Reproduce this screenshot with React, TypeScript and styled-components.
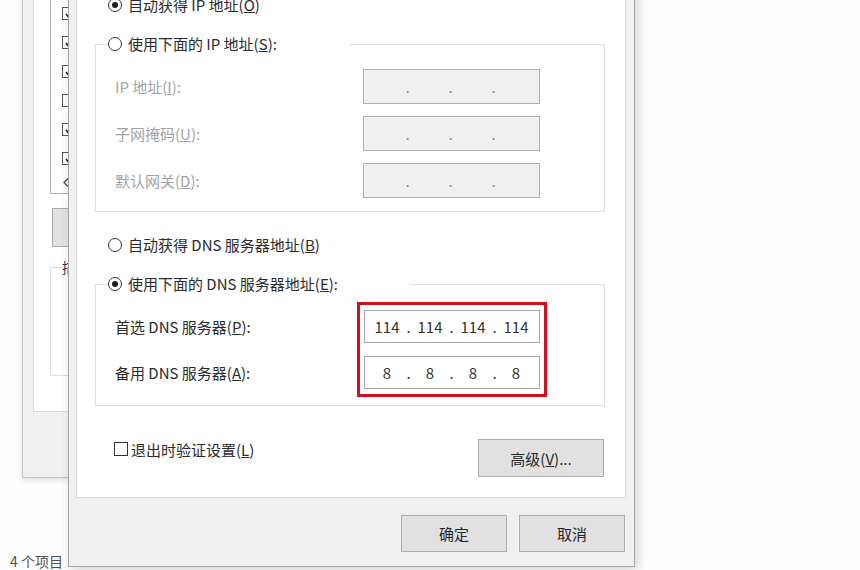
import React from 'react';
import styled, { createGlobalStyle } from 'styled-components';

const GlobalStyle = createGlobalStyle`
  html, body {
    margin: 0;
    padding: 0;
    background: #fdfdfd;
    overflow: hidden;
  }
`;

const Acc = ({ k }: { k: string }) => <u>{k}</u>;

const App = () => {
  return (
    <>
      <GlobalStyle />
      <Desktop>
        <StatusText>4 个项目</StatusText>

        <BackWindow>
          <BackPage>
            <ListBox>
              {[true, true, true, false, true, true].map((c, i) => (
                <ListItem key={i}>
                  <MiniCheck>
                    {c && (
                      <svg width="8" height="8" viewBox="0 0 8 8">
                        <polyline points="1,4 3,6.5 7,1.5" fill="none" stroke="#222" strokeWidth="1.6" />
                      </svg>
                    )}
                  </MiniCheck>
                </ListItem>
              ))}
              <ScrollRow>
                <svg width="6" height="9" viewBox="0 0 6 9">
                  <polyline points="5,0.5 1,4.5 5,8.5" fill="none" stroke="#555" strokeWidth="1.5" />
                </svg>
              </ScrollRow>
            </ListBox>
            <BackButton />
            <BackGroup>
              <BackLegend>描述</BackLegend>
            </BackGroup>
          </BackPage>
        </BackWindow>

        <Dialog>
          <TabPage>
            <RadioRow>
              <RadioDot $checked />
              <span>自动获得 IP 地址(<Acc k="O" />)</span>
            </RadioRow>

            <GroupBox>
              <GroupLegend>
                <RadioDot />
                <span>使用下面的 IP 地址(<Acc k="S" />):</span>
              </GroupLegend>
              <GroupBody>
                <FieldGrid $labelWidth={248} $gap={12}>
                  <FieldLabel $disabled>IP 地址(<Acc k="I" />):</FieldLabel>
                  <IpField $disabled><IpParts parts={['', '', '', '']} /></IpField>
                  <FieldLabel $disabled>子网掩码(<Acc k="U" />):</FieldLabel>
                  <IpField $disabled><IpParts parts={['', '', '', '']} /></IpField>
                  <FieldLabel $disabled>默认网关(<Acc k="D" />):</FieldLabel>
                  <IpField $disabled><IpParts parts={['', '', '', '']} /></IpField>
                </FieldGrid>
              </GroupBody>
            </GroupBox>

            <RadioRow $top={22}>
              <RadioDot />
              <span>自动获得 DNS 服务器地址(<Acc k="B" />)</span>
            </RadioRow>

            <GroupBox>
              <GroupLegend>
                <RadioDot $checked />
                <span>使用下面的 DNS 服务器地址(<Acc k="E" />):</span>
              </GroupLegend>
              <DnsBody>
                <LabelColumn>
                  <DnsLabel>首选 DNS 服务器(<Acc k="P" />):</DnsLabel>
                  <DnsLabel>备用 DNS 服务器(<Acc k="A" />):</DnsLabel>
                </LabelColumn>
                <Highlight>
                  <IpField $short><IpParts parts={['114', '114', '114', '114']} /></IpField>
                  <IpField $short><IpParts parts={['8', '8', '8', '8']} /></IpField>
                </Highlight>
              </DnsBody>
            </GroupBox>

            <CheckRow>
              <CheckLabel>
                <CheckBox />
                <span>退出时验证设置(<Acc k="L" />)</span>
              </CheckLabel>
              <AdvancedButton>高级(<Acc k="V" />)...</AdvancedButton>
            </CheckRow>
          </TabPage>

          <ButtonBar>
            <DialogButton>确定</DialogButton>
            <DialogButton>取消</DialogButton>
          </ButtonBar>
        </Dialog>
      </Desktop>
    </>
  );
};

const IpParts = ({ parts }: { parts: string[] }) => (
  <>
    {parts.map((p, i) => (
      <React.Fragment key={i}>
        {i > 0 && <IpDot>.</IpDot>}
        <Octet>{p}</Octet>
      </React.Fragment>
    ))}
  </>
);

export default App;

const Desktop = styled.div`
  position: relative;
  width: 860px;
  height: 570px;
  overflow: hidden;
  background: #fdfdfd;
  font-family: "Noto Sans CJK SC", "Noto Sans", sans-serif;
  font-size: 15px;
  color: #2b2b2b;
`

const StatusText = styled.div`
  position: absolute;
  left: 10px;
  top: 551px;
  font-size: 14px;
  line-height: 20px;
  color: #505050;
`

const BackWindow = styled.div`
  position: absolute;
  left: 22px;
  top: -20px;
  width: 180px;
  height: 498px;
  box-sizing: border-box;
  border: 1px solid #c2c2c2;
  background: #f0f0f0;
  box-shadow: 0 2px 6px rgba(0, 0, 0, 0.12);
  padding: 0 0 65px 10px;
  display: flex;
`

const BackPage = styled.div`
  flex: 1;
  background: #fff;
  border: 1px solid #d9d9d9;
  border-top: none;
  padding-left: 16px;
  display: flex;
  flex-direction: column;
`

const ListBox = styled.div`
  height: 213px;
  box-sizing: border-box;
  border: 1px solid #adadad;
  border-top: none;
  padding-top: 18px;
  display: flex;
  flex-direction: column;
`

const ListItem = styled.div`
  height: 29px;
  display: flex;
  align-items: center;
  padding-left: 11px;
`

const MiniCheck = styled.span`
  width: 13px;
  height: 13px;
  box-sizing: border-box;
  border: 1px solid #555;
  display: inline-flex;
  align-items: center;
  justify-content: center;
`

const ScrollRow = styled.div`
  height: 18px;
  display: flex;
  align-items: center;
  padding-left: 12px;
`

const BackButton = styled.div`
  height: 39px;
  margin: 14px 0 0 2px;
  box-sizing: border-box;
  border: 1px solid #adadad;
  background: #e1e1e1;
`

const BackGroup = styled.fieldset`
  margin: 11px 0 0;
  padding: 0;
  height: 118px;
  box-sizing: border-box;
  border: 1px solid #dcdcdc;
  min-width: 0;
`

const BackLegend = styled.legend`
  margin-left: 11px;
  padding: 0;
  font-size: 14px;
  line-height: 18px;
  color: #333;
`

const Dialog = styled.div`
  position: absolute;
  left: 68px;
  top: -40px;
  width: 567px;
  height: 607px;
  box-sizing: border-box;
  border: 1px solid #a6a6a6;
  background: #f0f0f0;
  box-shadow: 3px 3px 10px rgba(0, 0, 0, 0.16);
  display: flex;
  flex-direction: column;
`

const TabPage = styled.div`
  height: 537px;
  box-sizing: border-box;
  margin: 0 8px 0 7px;
  background: #fff;
  border: 1px solid #d9d9d9;
  border-top: none;
  padding: 33px 20px 0 18px;
  display: flex;
  flex-direction: column;
`

const RadioRow = styled.div<{ $top?: number }>`
  height: 22px;
  margin-top: ${p => p.$top ?? 0}px;
  padding-left: 13px;
  display: flex;
  align-items: center;
  gap: 6px;
  line-height: 22px;
`

const RadioDot = styled.span<{ $checked?: boolean }>`
  width: 14px;
  height: 14px;
  box-sizing: border-box;
  border-radius: 50%;
  border: 1px solid #333;
  background: #fff;
  display: inline-flex;
  align-items: center;
  justify-content: center;
  flex-shrink: 0;

  &::after {
    content: '';
    width: 6px;
    height: 6px;
    border-radius: 50%;
    background: ${p => (p.$checked ? '#1e1e1e' : 'transparent')};
  }
`

const GroupBox = styled.fieldset`
  margin: 17px 0 0;
  padding: 0;
  border: 1px solid #dcdcdc;
  min-width: 0;
`

const GroupLegend = styled.legend`
  margin-left: 12px;
  padding: 0 72px 0 0;
  height: 22px;
  line-height: 22px;
  display: flex;
  align-items: center;
  gap: 6px;
  background: #fff;
`

const GroupBody = styled.div`
  padding: 14px 0 13px 19px;
`

const FieldGrid = styled.div<{ $labelWidth: number; $gap: number }>`
  display: grid;
  grid-template-columns: ${p => p.$labelWidth}px 177px;
  row-gap: ${p => p.$gap}px;
  align-items: center;
`

const FieldLabel = styled.div<{ $disabled?: boolean }>`
  color: ${p => (p.$disabled ? '#a3a3a3' : '#2b2b2b')};
`

const IpField = styled.div<{ $disabled?: boolean; $short?: boolean }>`
  width: ${p => (p.$short ? 176 : 177)}px;
  height: ${p => (p.$short ? 33 : 35)}px;
  box-sizing: border-box;
  border: 1px solid ${p => (p.$disabled ? '#b0b0b0' : '#a8a8a8')};
  background: ${p => (p.$disabled ? '#f0f0f0' : '#fff')};
  padding-left: 5px;
  display: grid;
  grid-template-columns: 34px 9px 34px 9px 34px 9px 34px;
  align-items: center;
  color: ${p => (p.$disabled ? '#8a8a8a' : '#333')};
`

const Octet = styled.span`
  text-align: center;
  font-size: 15px;
`

const IpDot = styled.span`
  text-align: center;
  font-size: 15px;
`

const DnsBody = styled.div`
  padding: 7px 0 8px 19px;
  display: flex;
`

const LabelColumn = styled.div`
  width: 242px;
  padding-top: 8px;
  display: flex;
  flex-direction: column;
  gap: 13px;
`

const DnsLabel = styled.div`
  height: 33px;
  display: flex;
  align-items: center;
`

const Highlight = styled.div`
  border: 3px solid #d0101f;
  padding: 5px 4px;
  display: flex;
  flex-direction: column;
  gap: 13px;
`

const CheckRow = styled.div`
  margin-top: 33px;
  padding-left: 19px;
  display: flex;
  justify-content: space-between;
  align-items: flex-start;
`

const CheckLabel = styled.div`
  height: 20px;
  display: flex;
  align-items: center;
  gap: 3px;
`

const CheckBox = styled.span`
  width: 14px;
  height: 14px;
  box-sizing: border-box;
  border: 1px solid #333;
  background: #fff;
`

const PushButton = styled.div`
  box-sizing: border-box;
  border: 1px solid #adadad;
  background: #e1e1e1;
  display: flex;
  align-items: center;
  justify-content: center;
  color: #262626;
`

const AdvancedButton = styled(PushButton)`
  width: 126px;
  height: 38px;
  margin-right: 1px;
`

const ButtonBar = styled.div`
  flex: 1;
  display: flex;
  justify-content: flex-end;
  gap: 12px;
  padding: 17px 9px 0 0;
`

const DialogButton = styled(PushButton)`
  width: 106px;
  height: 37px;
`
